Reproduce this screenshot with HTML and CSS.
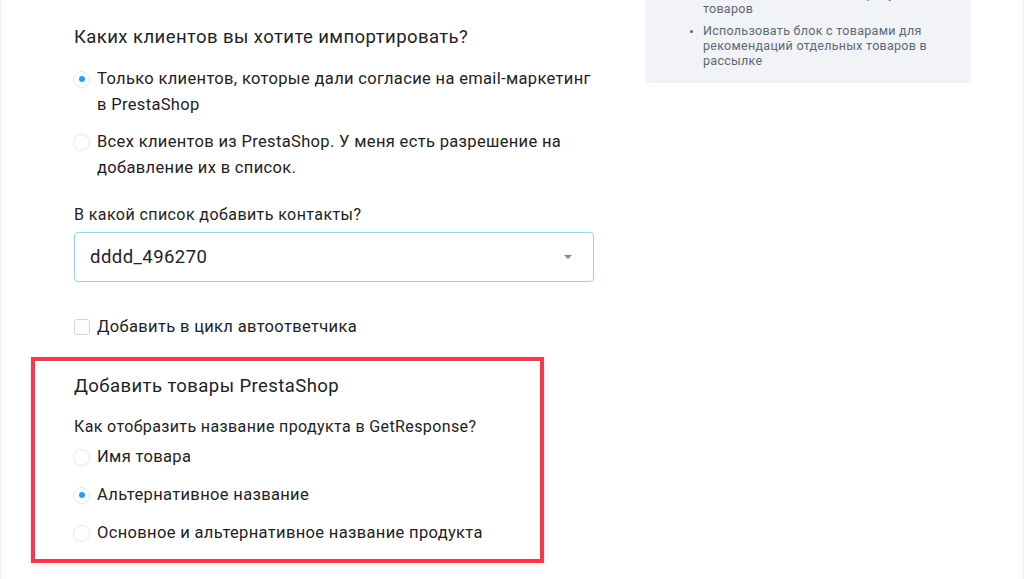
FILE: index.html
```html
<!DOCTYPE html>
<html lang="ru">
<head>
<meta charset="utf-8">
<title>Импорт клиентов PrestaShop</title>
<link rel="stylesheet" href="styles.css">
</head>
<body>
<div class="page">
  <main class="main">
    <h2 class="title">Каких клиентов вы хотите импортировать?</h2>
    <div class="options">
      <label class="radio-row">
        <span class="radio checked"></span>
        <span class="radio-text">Только клиентов, которые дали согласие на email-маркетинг в PrestaShop</span>
      </label>
      <label class="radio-row">
        <span class="radio"></span>
        <span class="radio-text">Всех клиентов из PrestaShop. У меня есть разрешение на добавление их в список.</span>
      </label>
    </div>
    <div class="field-label">В какой список добавить контакты?</div>
    <div class="select">
      <span class="select-value">dddd_496270</span>
      <span class="caret"></span>
    </div>
    <label class="check-row">
      <span class="checkbox"></span>
      <span>Добавить в цикл автоответчика</span>
    </label>
    <section class="highlight">
      <h3 class="title">Добавить товары PrestaShop</h3>
      <div class="field-label sub">Как отобразить название продукта в GetResponse?</div>
      <div class="options compact">
        <label class="radio-row single">
          <span class="radio"></span>
          <span class="radio-text">Имя товара</span>
        </label>
        <label class="radio-row single">
          <span class="radio checked"></span>
          <span class="radio-text">Альтернативное название</span>
        </label>
        <label class="radio-row single">
          <span class="radio"></span>
          <span class="radio-text">Основное и альтернативное название продукта</span>
        </label>
      </div>
    </section>
  </main>
  <aside class="side">
    <ul class="side-list">
      <li>Рекомендовать похожие продукты для<br>товаров</li>
      <li>Использовать блок с товарами для рекомендаций отдельных товаров в рассылке</li>
    </ul>
  </aside>
</div>
</body>
</html>
```
FILE: styles.css
```css
* { box-sizing: border-box; }
html, body { margin: 0; padding: 0; }
body {
  background: #ffffff;
  font-family: Roboto, "Noto Sans", "Liberation Sans", sans-serif;
  color: #1e2227;
  overflow: hidden;
  height: 579px;
}
.page {
  display: flex;
  align-items: flex-start;
  height: 579px;
  border-left: 2px solid #f3f4f7;
  border-right: 2px solid #f3f4f7;
}
.main {
  margin-left: 72px;
  width: 520px;
  padding-top: 25px;
  display: flex;
  flex-direction: column;
}
.title {
  margin: 0;
  font-size: 18.5px;
  letter-spacing: 0.43px;
  line-height: 24px;
  font-weight: 400;
  color: #1e2227;
}
.options {
  display: flex;
  flex-direction: column;
  gap: 11px;
  margin-top: 17px;
}
.radio-row {
  display: flex;
  align-items: flex-start;
  gap: 7px;
  font-size: 16.5px;
  letter-spacing: 0.34px;
  line-height: 26px;
}
.radio {
  flex: none;
  width: 17px;
  height: 17px;
  margin-top: 4.5px;
  margin-left: -1px;
  border: 1px solid #e4e6ea;
  border-radius: 50%;
  display: flex;
  align-items: center;
  justify-content: center;
  background: #fff;
}
.radio.checked::after {
  content: "";
  width: 6px;
  height: 6px;
  border-radius: 50%;
  background: #16a3f2;
}
.field-label {
  margin-top: 24px;
  font-size: 16px;
  letter-spacing: 0.42px;
  line-height: 20px;
}
.select {
  margin-top: 7px;
  height: 50px;
  border: 1px solid #93d3f8;
  border-radius: 4px;
  display: flex;
  align-items: center;
  justify-content: space-between;
  padding: 0 21px 0 15px;
}
.select-value {
  font-size: 18.5px;
  letter-spacing: 0.45px;
  line-height: 24px;
}
.caret {
  width: 0;
  height: 0;
  border-left: 4px solid transparent;
  border-right: 4px solid transparent;
  border-top: 4px solid #7d8898;
}
.check-row {
  margin-top: 33px;
  display: flex;
  align-items: center;
  gap: 7px;
  font-size: 16.5px;
  letter-spacing: 0.34px;
  line-height: 24px;
}
.checkbox {
  width: 16px;
  height: 16px;
  border: 1px solid #d5d8dd;
  border-radius: 3px;
  background: #fff;
}
.highlight {
  margin-top: 18px;
  margin-left: -43px;
  width: 513px;
  border: 4px solid #f2394e;
  padding: 13px 10px 14px 39px;
  box-shadow: 0 2px 5px rgba(0, 0, 0, 0.12);
}
.field-label.sub {
  margin-top: 19px;
  letter-spacing: 0.38px;
}
.options.compact {
  margin-top: 8px;
  gap: 14px;
}
.radio-row.single {
  line-height: 24px;
}
.radio-row.single .radio {
  margin-top: 3.5px;
}
.side {
  margin-left: 51px;
  width: 326px;
  margin-top: -26px;
  background: #f1f3f7;
  padding: 12px 24px 15px 0;
}
.side-list {
  margin: 0;
  padding-left: 58px;
  font-size: 12.5px;
  letter-spacing: 0.28px;
  line-height: 15px;
  color: #5d6876;
  display: flex;
  flex-direction: column;
  gap: 7px;
}
.side-list li::marker {
  font-size: 10px;
}
```
